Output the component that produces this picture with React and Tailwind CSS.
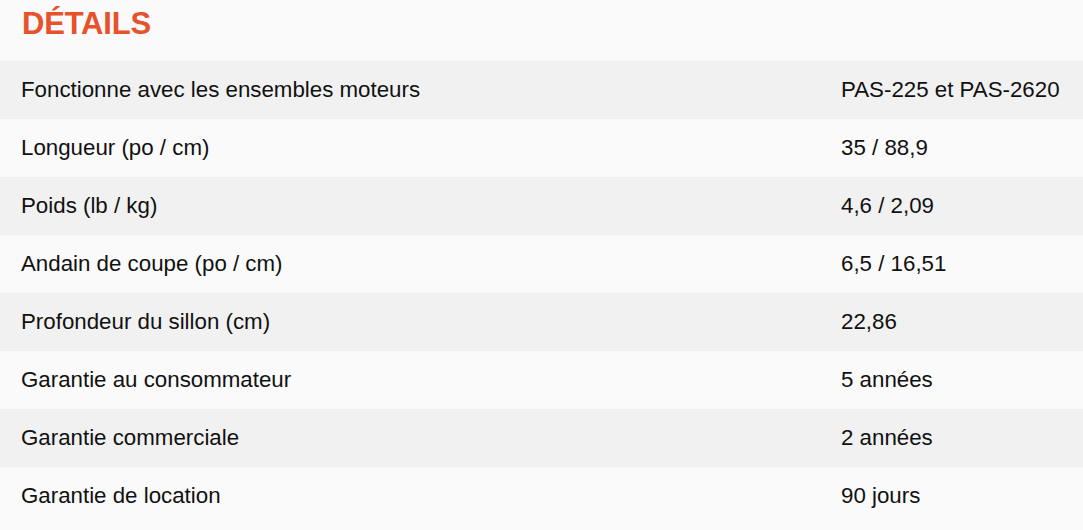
import React from 'react';

const rows = [
  ['Fonctionne avec les ensembles moteurs', 'PAS-225 et PAS-2620'],
  ['Longueur (po / cm)', '35 / 88,9'],
  ['Poids (lb / kg)', '4,6 / 2,09'],
  ['Andain de coupe (po / cm)', '6,5 / 16,51'],
  ['Profondeur du sillon (cm)', '22,86'],
  ['Garantie au consommateur', '5 années'],
  ['Garantie commerciale', '2 années'],
  ['Garantie de location', '90 jours'],
];

export default function App() {
  return (
    <div className="w-[1083px] h-[530px] overflow-hidden bg-[#fafafa] font-['Liberation_Sans',Arial,sans-serif]">
      <div className="h-[61px] pl-[22px] pt-[4px]">
        <h2 className="text-[31px] leading-[40px] font-bold tracking-[-0.2px] text-[#e6522b]">DÉTAILS</h2>
      </div>
      <div className="flex flex-col">
        {rows.map(([label, value], i) => (
          <div
            key={label}
            className={`grid grid-cols-[820px_1fr] items-center h-[58px] pl-[21px] text-[22.3px] text-[#111] ${i % 2 === 0 ? 'bg-[#f1f1f1]' : 'bg-[#fafafa]'}`}
          >
            <span>{label}</span>
            <span>{value}</span>
          </div>
        ))}
      </div>
    </div>
  );
}
